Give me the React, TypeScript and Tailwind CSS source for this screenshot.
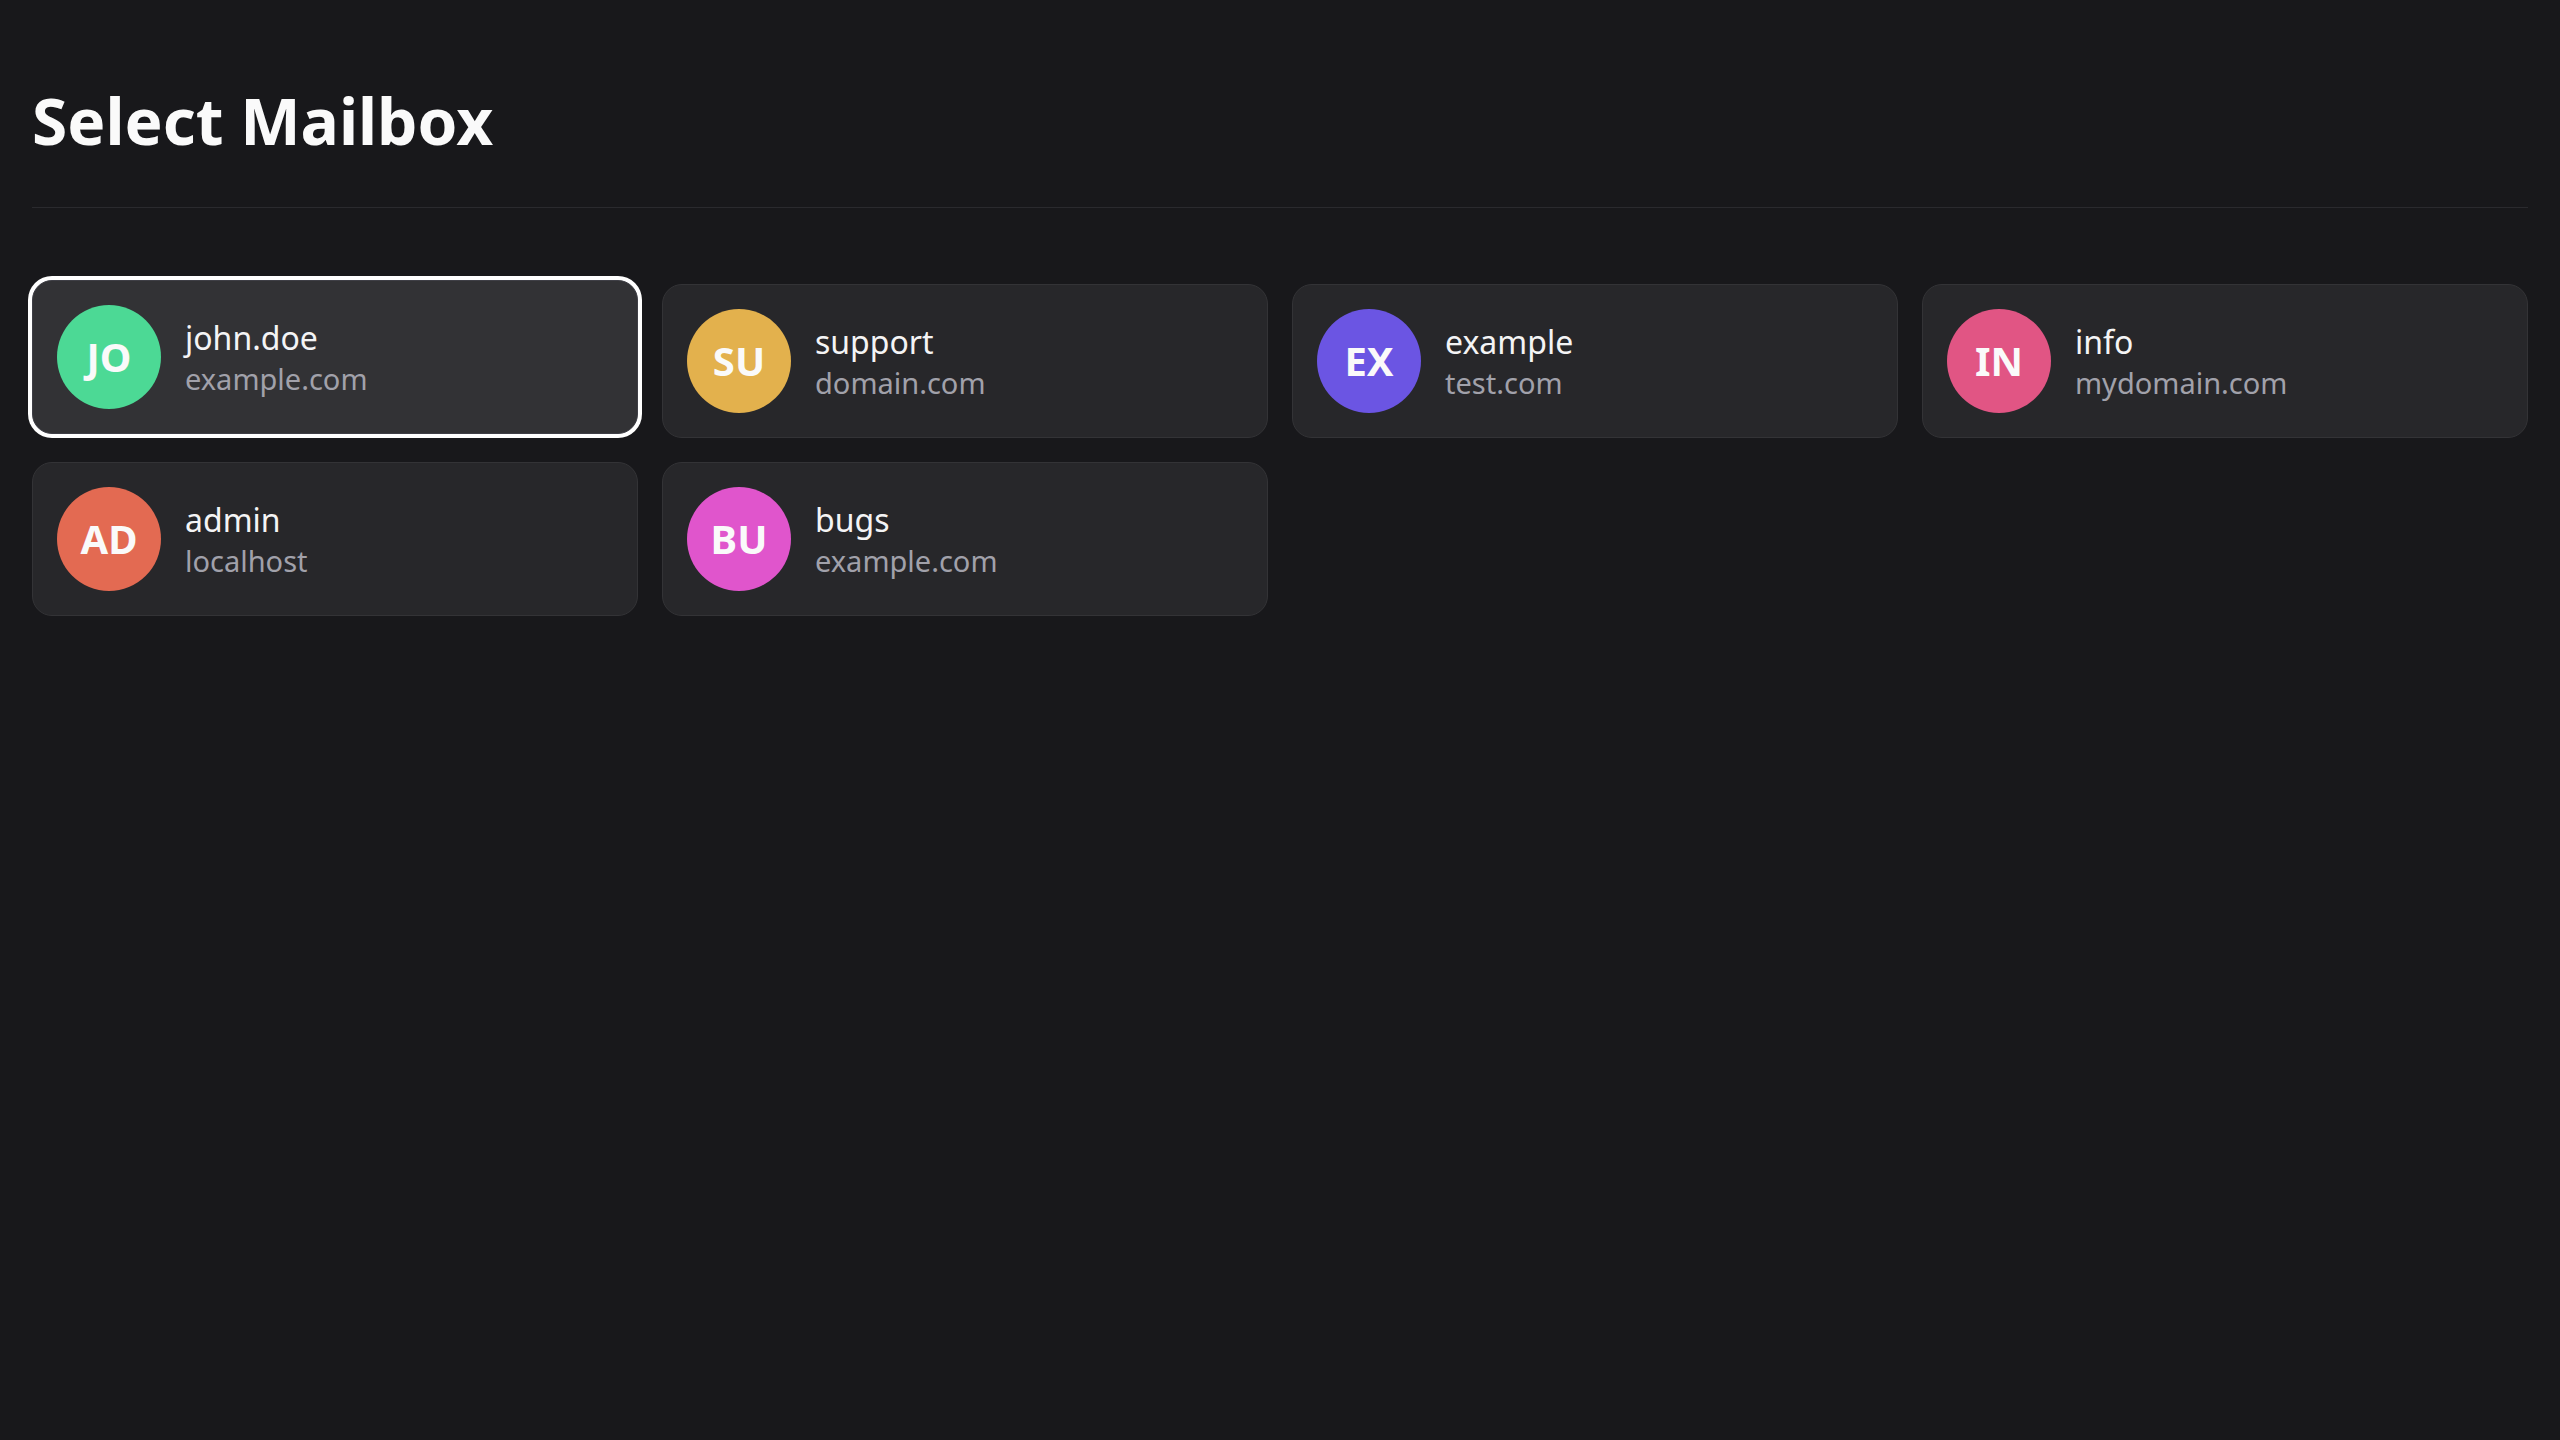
import React from "react";

type Mailbox = {
  user: string;
  domain: string;
  color: string;
};

const mailboxes: Mailbox[] = [
  { user: "john.doe", domain: "example.com", color: "bg-[#4cd995]" },
  { user: "support", domain: "domain.com", color: "bg-[#e3b14d]" },
  { user: "example", domain: "test.com", color: "bg-[#6b55e3]" },
  { user: "info", domain: "mydomain.com", color: "bg-[#e15584]" },
  { user: "admin", domain: "localhost", color: "bg-[#e36a52]" },
  { user: "bugs", domain: "example.com", color: "bg-[#e055cc]" },
];

function MailboxCard({ box, selected }: { box: Mailbox; selected: boolean }) {
  const initials = box.user.slice(0, 2).toUpperCase();
  return (
    <button
      type="button"
      className={
        selected
          ? "flex items-center gap-6 p-6 rounded-[20px] border border-[#3f3f46] bg-[#323235] ring-4 ring-white -translate-y-1 text-left"
          : "flex items-center gap-6 p-6 rounded-[20px] border border-[#333336] bg-[#27272a] text-left"
      }
    >
      <div
        className={`${box.color} w-[104px] h-[104px] shrink-0 rounded-full flex items-center justify-center text-[40px] font-bold text-[#fafafa]`}
      >
        {initials}
      </div>
      <div className="flex flex-col">
        <span className="text-[32px] leading-[44px] text-[#f4f4f5]">{box.user}</span>
        <span className="text-[29px] leading-[38px] text-[#a1a1aa]">{box.domain}</span>
      </div>
    </button>
  );
}

export default function App() {
  return (
    <div
      className="min-h-screen bg-[#18181b] px-8 pt-[83px]"
      style={{ fontFamily: '"Noto Sans", "Open Sans", sans-serif' }}
    >
      <h1 className="text-[64px] leading-[1.2] font-bold text-[#fafafa] pb-[47px] border-b border-[#2a2a2e]">
        Select Mailbox
      </h1>
      <div className="grid grid-cols-4 gap-6 mt-[76px]">
        {mailboxes.map((box, i) => (
          <MailboxCard key={box.user + box.domain} box={box} selected={i === 0} />
        ))}
      </div>
    </div>
  );
}
